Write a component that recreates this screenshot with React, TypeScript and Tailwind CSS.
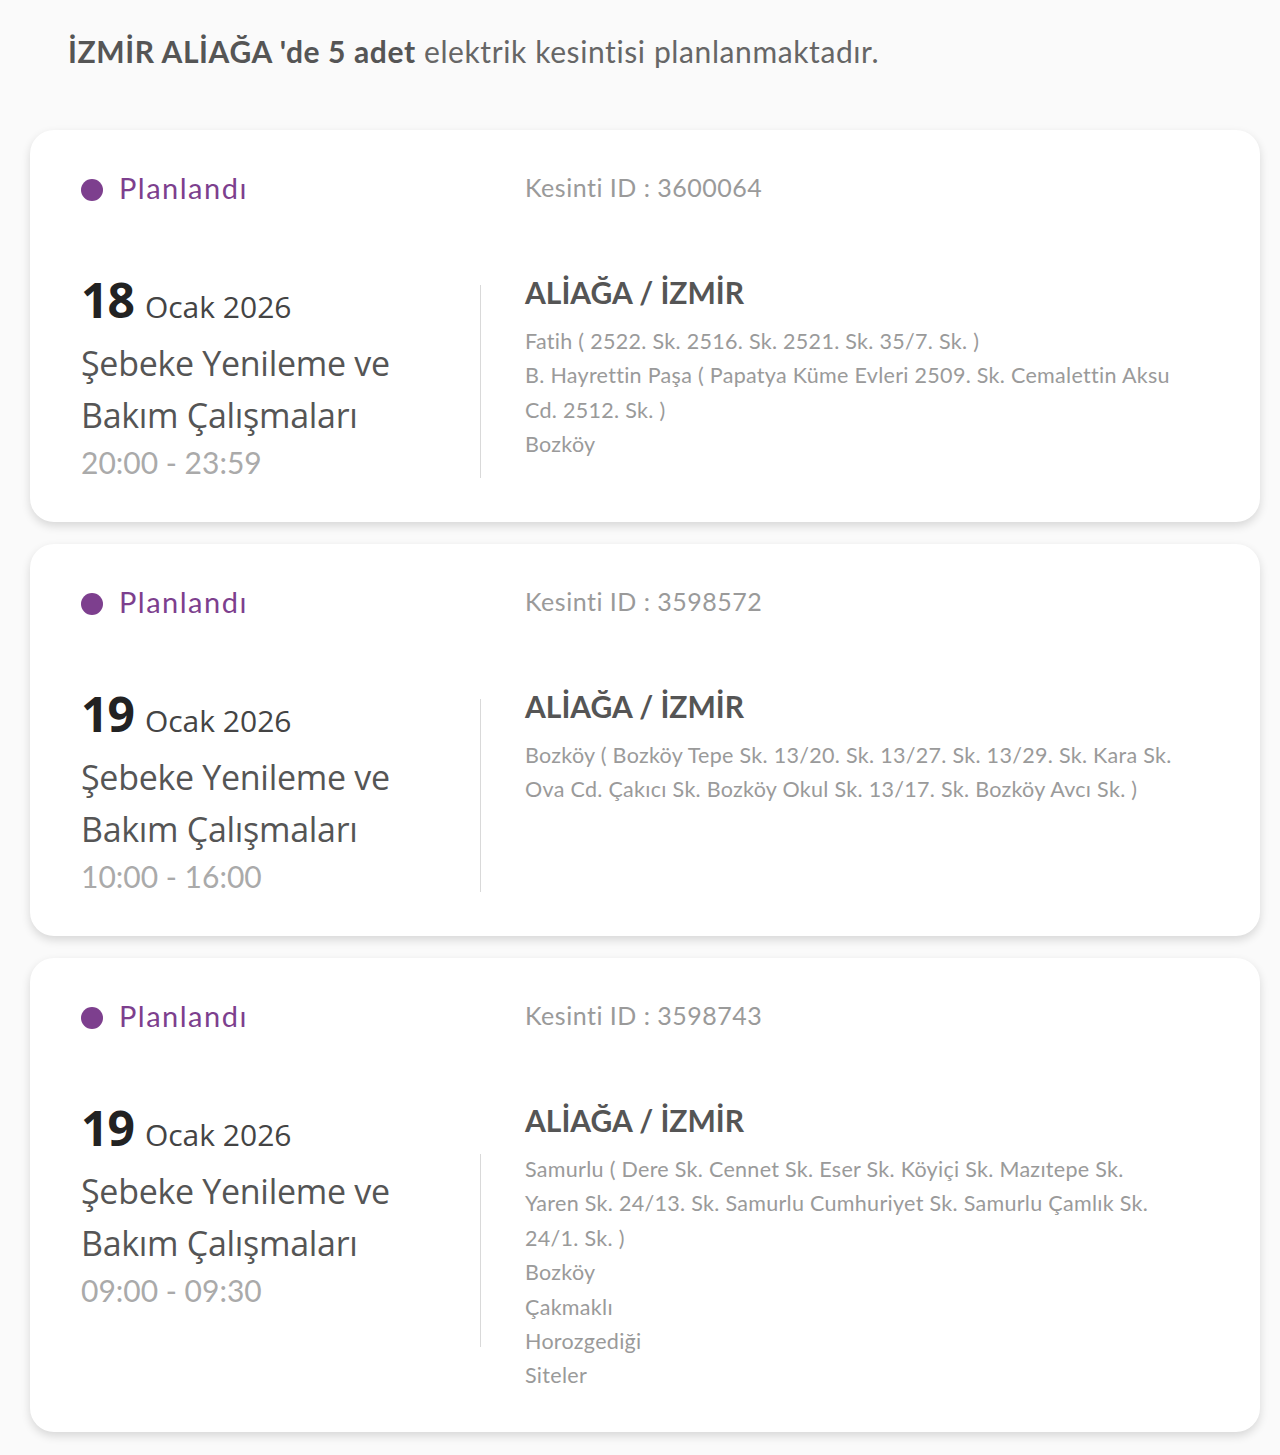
import React from "react";

type Item = {
  day: string;
  id: string;
  time: string;
  lines: string[];
};

const items: Item[] = [
  {
    day: "18",
    id: "3600064",
    time: "20:00 - 23:59",
    lines: [
      "Fatih ( 2522. Sk. 2516. Sk. 2521. Sk. 35/7. Sk. )",
      "B. Hayrettin Paşa ( Papatya Küme Evleri 2509. Sk. Cemalettin Aksu",
      "Cd. 2512. Sk. )",
      "Bozköy",
    ],
  },
  {
    day: "19",
    id: "3598572",
    time: "10:00 - 16:00",
    lines: [
      "Bozköy ( Bozköy Tepe Sk. 13/20. Sk. 13/27. Sk. 13/29. Sk. Kara Sk.",
      "Ova Cd. Çakıcı Sk. Bozköy Okul Sk. 13/17. Sk. Bozköy Avcı Sk. )",
    ],
  },
  {
    day: "19",
    id: "3598743",
    time: "09:00 - 09:30",
    lines: [
      "Samurlu ( Dere Sk. Cennet Sk. Eser Sk. Köyiçi Sk. Mazıtepe Sk.",
      "Yaren Sk. 24/13. Sk. Samurlu Cumhuriyet Sk. Samurlu Çamlık Sk.",
      "24/1. Sk. )",
      "Bozköy",
      "Çakmaklı",
      "Horozgediği",
      "Siteler",
    ],
  },
];

const geo = { fontFamily: "Lato, 'Noto Sans', sans-serif" };
const ubu = { fontFamily: "'Open Sans', 'Noto Sans', sans-serif" };

function Card({ item }: { item: Item }) {
  return (
    <div className="bg-white rounded-[24px] shadow-[0_4px_10px_rgba(0,0,0,0.14)] pl-[51px] pr-[50px] pt-[38px] pb-[39px]">
      <div className="grid grid-cols-[355px_1px_1fr] gap-x-[44px]">
        <div className="flex items-center gap-[16px] h-[40px]" style={geo}>
          <span className="w-[22px] h-[22px] rounded-full bg-[#7d3f8e] mt-[4px]" />
          <span className="text-[29px] tracking-[1.5px] text-[#7d3f8e]">Planlandı</span>
        </div>
        <div />
        <div className="h-[40px] flex items-center text-[25px] tracking-[0.5px] text-[#9a9a9a]" style={geo}>
          Kesinti ID : {item.id}
        </div>
      </div>
      <div className="grid grid-cols-[355px_1px_1fr] gap-x-[44px] mt-[64px]">
        <div style={ubu}>
          <div className="flex items-baseline gap-[11px] leading-[56px]">
            <span className="text-[48px] font-bold text-[#222] tracking-[-1px]">{item.day}</span>
            <span className="text-[30px] text-[#444]">Ocak 2026</span>
          </div>
          <div className="text-[34px] text-[#555] leading-[52px] mt-[2px] tracking-[-0.3px]">
            Şebeke Yenileme ve
            <br />
            Bakım Çalışmaları
          </div>
          <div className="text-[30px] text-[#aaa] leading-[42px]" style={geo}>
            {item.time}
          </div>
        </div>
        <div className="bg-[#d9d9d9] w-px h-[193px] self-center mt-[8px]" />
        <div style={geo}>
          <div className="text-[30px] font-bold text-[#555] leading-[40px] mb-[12px]">ALİAĞA / İZMİR</div>
          <div className="text-[21.5px] tracking-[0.3px] text-[#9a9a9a] leading-[34.4px] whitespace-nowrap">
            {item.lines.map((l, i) => (
              <div key={i}>{l}</div>
            ))}
          </div>
        </div>
      </div>
    </div>
  );
}

export default function App() {
  return (
    <div className="min-h-[1455px] bg-[#fafafa] pb-[20px]">
      <div className="pl-[68px] pt-[29px] h-[130px] text-[30px] tracking-[0.6px] text-[#666]" style={geo}>
        <span className="font-bold text-[#555]">İZMİR ALİAĞA 'de 5 adet</span> elektrik kesintisi planlanmaktadır.
      </div>
      <div className="px-[30px] pr-[20px] flex flex-col gap-[22px]">
        {items.map((it, i) => (
          <Card key={i} item={it} />
        ))}
      </div>
    </div>
  );
}
